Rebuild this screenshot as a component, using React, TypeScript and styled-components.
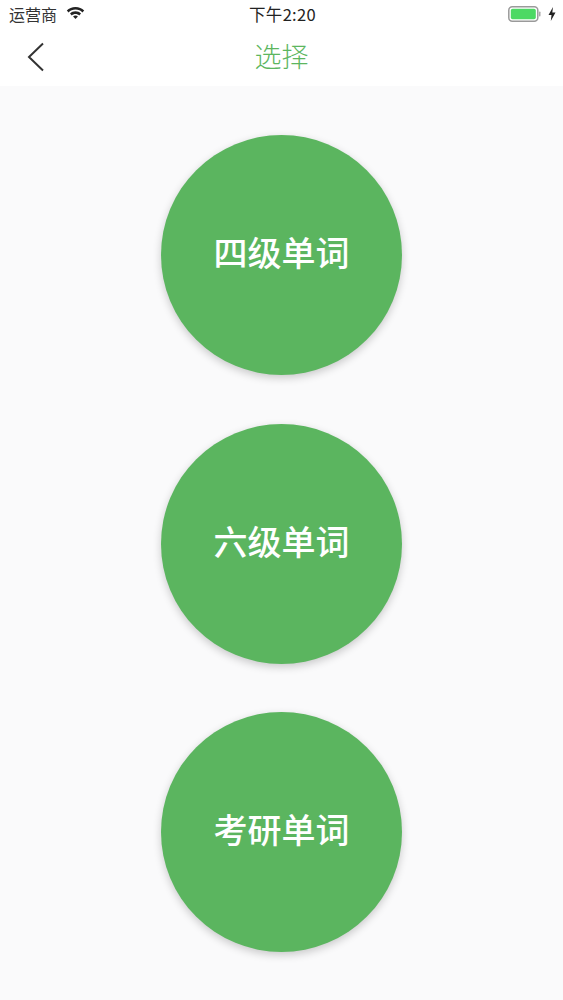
import React from "react";
import styled, { createGlobalStyle } from "styled-components";

const Global = createGlobalStyle`
  html, body { margin: 0; padding: 0; background: #fafafb; }
  body { font-family: "Noto Sans CJK SC", "Liberation Sans", sans-serif; }
`;

const Page = styled.div`
  width: 563px;
  height: 1000px;
  display: flex;
  flex-direction: column;
  overflow: hidden;
  background: #fafafb;
`;

const Header = styled.header`
  height: 86px;
  flex: none;
  background: #fff;
  display: flex;
  flex-direction: column;
`;

const StatusBar = styled.div`
  height: 28px;
  padding: 0 7px 0 9px;
  display: grid;
  grid-template-columns: 1fr auto 1fr;
  align-items: center;
  font-size: 16px;
  line-height: 1;
  color: #333;
`;

const StatusLeft = styled.div`
  display: flex;
  align-items: center;
  gap: 9px;
`;

const StatusRight = styled.div`
  display: flex;
  align-items: center;
  justify-content: flex-end;
  gap: 7px;
`;

const Clock = styled.span`
  color: #222;
  font-size: 16.5px;
  letter-spacing: 0.3px;
`;

const NavBar = styled.div`
  height: 58px;
  position: relative;
  display: flex;
  align-items: center;
  justify-content: center;
`;

const BackButton = styled.button`
  position: absolute;
  left: 24px;
  top: 14px;
  width: 24px;
  height: 30px;
  border: 0;
  padding: 0;
  background: none;
  display: block;
`;

const Title = styled.h1`
  margin: 0 0 4px;
  font-size: 27px;
  font-weight: 300;
  color: #5cb660;
  line-height: 1;
`;

const List = styled.main`
  flex: 1;
  display: flex;
  flex-direction: column;
  align-items: center;
  gap: 48.5px;
  padding-top: 49px;
`;

const Circle = styled.button`
  flex: none;
  width: 241px;
  height: 240px;
  border: 0;
  padding: 0 0 6px;
  border-radius: 50%;
  background: #5bb55f;
  color: #fff;
  font-family: inherit;
  font-size: 34px;
  font-weight: 500;
  line-height: 1;
  box-shadow: 0 3px 8px rgba(0, 0, 0, 0.2);
`;

const Wifi = () => (
  <svg width="19" height="14" viewBox="0 0 19 14">
    <path d="M9.500 0C6 0 3 1.300.8 3.500l1.800 1.900C4.400 3.600 6.800 2.600 9.500 2.600s5.100 1 6.900 2.800l1.800-1.900C16 1.300 13 0 9.500 0z" fill="#222" />
    <path d="M9.500 4.300c-2.200 0-4.100.8-5.500 2.200l1.800 1.900c1-1 2.300-1.500 3.700-1.500s2.700.5 3.700 1.500L15 6.500c-1.400-1.400-3.300-2.200-5.500-2.200z" fill="#222" />
    <path d="M9.500 8.600c-1 0-1.800.4-2.400 1l2.400 2.500 2.400-2.500c-.6-.6-1.400-1-2.400-1z" fill="#222" />
  </svg>
);

const Battery = () => (
  <svg width="33" height="16" viewBox="0 0 33 16">
    <rect x="0.800" y="0.800" width="29" height="14.400" rx="3.500" fill="none" stroke="#9a9a9a" strokeWidth="1.500" />
    <rect x="2.800" y="2.800" width="25" height="10.400" rx="1.800" fill="#4cd964" />
    <rect x="31" y="5.500" width="1.500" height="5" rx="0.700" fill="#aaa" />
  </svg>
);

const Bolt = () => (
  <svg width="8" height="14" viewBox="0 0 8 14">
    <path d="M5 0 0.500 8H3.500L2.800 14 7.500 5.500H4.300z" fill="#222" />
  </svg>
);

const Chevron = () => (
  <svg width="24" height="30" viewBox="0 0 24 30">
    <path d="M19 1.500 5 15l14 13.500" fill="none" stroke="#333" strokeWidth="2" />
  </svg>
);

const items = ["四级单词", "六级单词", "考研单词"];

export default function App() {
  return (
    <Page>
      <Global />
      <Header>
        <StatusBar>
          <StatusLeft>
            <span>运营商</span>
            <Wifi />
          </StatusLeft>
          <Clock>下午2:20</Clock>
          <StatusRight>
            <Battery />
            <Bolt />
          </StatusRight>
        </StatusBar>
        <NavBar>
          <BackButton aria-label="返回">
            <Chevron />
          </BackButton>
          <Title>选择</Title>
        </NavBar>
      </Header>
      <List>
        {items.map((t) => (
          <Circle key={t}>{t}</Circle>
        ))}
      </List>
    </Page>
  );
}
